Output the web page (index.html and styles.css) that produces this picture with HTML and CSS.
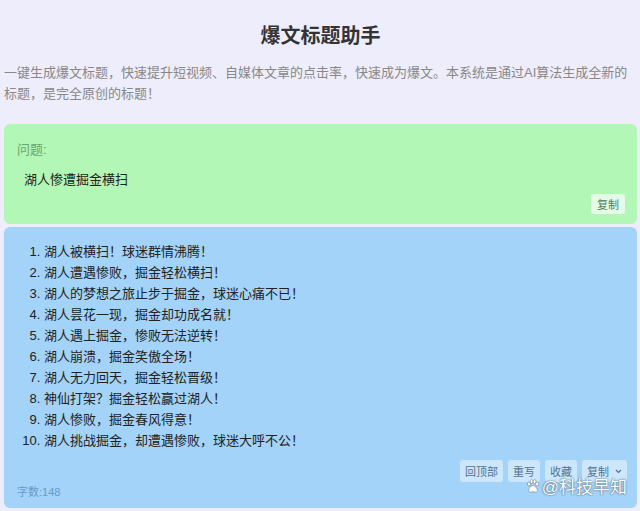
FILE: index.html
```html
<!DOCTYPE html>
<html lang="zh-CN">
<head>
    <meta charset="UTF-8">
    <meta name="viewport" content="width=device-width, initial-scale=1.0">
    <title>爆文标题助手</title>
    <link rel="stylesheet" href="styles.css">
</head>
<body>

<div class="container">
    <h1>爆文标题助手</h1>
    <p class="intro">一键生成爆文标题，快速提升短视频、自媒体文章的点击率，快速成为爆文。本系统是通过AI算法生成全新的标题，是完全原创的标题！</p>

    <div class="card question-card">
        <div class="label">问题:</div>
        <div class="question">湖人惨遭掘金横扫</div>
        <div class="actions">
            <button class="btn btn-green">复制</button>
        </div>
    </div>

    <div class="card answer-card">
        <ol class="result-list">
            <li>湖人被横扫！球迷群情沸腾！</li>
            <li>湖人遭遇惨败，掘金轻松横扫！</li>
            <li>湖人的梦想之旅止步于掘金，球迷心痛不已！</li>
            <li>湖人昙花一现，掘金却功成名就！</li>
            <li>湖人遇上掘金，惨败无法逆转！</li>
            <li>湖人崩溃，掘金笑傲全场！</li>
            <li>湖人无力回天，掘金轻松晋级！</li>
            <li>神仙打架？掘金轻松赢过湖人！</li>
            <li>湖人惨败，掘金春风得意！</li>
            <li>湖人挑战掘金，却遭遇惨败，球迷大呼不公！</li>
        </ol>
        <div class="actions">
            <button class="btn">回顶部</button>
            <button class="btn">重写</button>
            <button class="btn">收藏</button>
            <button class="btn">复制 <svg class="caret" width="7" height="5" viewBox="0 0 7 5"><path d="M1 1l2.5 2.5L6 1" fill="none" stroke="currentColor" stroke-width="1.1"/></svg></button>
        </div>
        <div class="count">字数:148</div>
        <div class="watermark">
            <svg width="14" height="14" viewBox="0 0 14 14"><g fill="#fff" stroke="#7a8c99" stroke-width="0.7"><ellipse cx="3" cy="5" rx="1.6" ry="2"/><ellipse cx="5.6" cy="2.6" rx="1.5" ry="2"/><ellipse cx="8.6" cy="2.6" rx="1.5" ry="2"/><ellipse cx="11.2" cy="5" rx="1.6" ry="2"/><path d="M7 6.5c-2 0-4.5 3-4.5 5 0 1.4 1.5 1.8 2.5 1.5 1-.3 3-.3 4 0 1 .3 2.5-.1 2.5-1.5 0-2-2.5-5-4.5-5z"/></g></svg>
            <span>@科技早知</span>
        </div>
    </div>
</div>

</body>
</html>
```

FILE: styles.css
```css
body {
    font-family: "Liberation Sans", "Noto Sans CJK SC", sans-serif;
    margin: 0;
    padding: 0 3px 0 4px;
    background-color: #eeedfb;
    color: #222;
}
.container {
    padding-top: 22px;
}
h1 {
    margin: 0;
    font-size: 20px;
    line-height: 28px;
    text-align: center;
    color: #333;
}
.intro {
    margin: 12px 0 20px;
    font-size: 13px;
    line-height: 21px;
    color: #888;
}
.card {
    border-radius: 6px;
    position: relative;
}
.question-card {
    background-color: #b2f7b5;
    padding: 16px 12px 10px 13px;
}
.label {
    font-size: 13px;
    line-height: 20px;
    color: #6aa56d;
}
.question {
    margin-top: 10px;
    padding-left: 7px;
    font-size: 13px;
    line-height: 20px;
    color: #222;
}
.actions {
    display: flex;
    justify-content: flex-end;
    gap: 5px;
    margin-top: 4px;
}
.btn {
    font-family: inherit;
    font-size: 11px;
    height: 22px;
    padding: 0 5px;
    border: none;
    border-radius: 3px;
    background-color: rgba(255, 255, 255, 0.45);
    color: #55708c;
    display: flex;
    align-items: center;
    gap: 4px;
}
.btn-green {
    height: 20px;
    padding: 0 6px;
    background-color: #e6fbe7;
    color: #4f7a57;
}
.caret {
    margin-left: 2px;
}
.answer-card {
    margin-top: 3px;
    background-color: #a3d3f8;
    padding: 14px 10px 8px 13px;
}
.result-list {
    margin: 0;
    padding-left: 27px;
    font-size: 13px;
    line-height: 21px;
}
.answer-card .actions {
    margin-top: 9px;
}
.count {
    font-size: 11px;
    line-height: 16px;
    color: #659bcc;
    margin-top: 2px;
}
.watermark {
    position: absolute;
    right: 10px;
    bottom: 10px;
    display: flex;
    align-items: center;
    gap: 2px;
    font-size: 17px;
    color: #fff;
    text-shadow: 0 0 2px rgba(60, 80, 100, 0.8), 0 0 1px rgba(60, 80, 100, 0.8);
}
```
